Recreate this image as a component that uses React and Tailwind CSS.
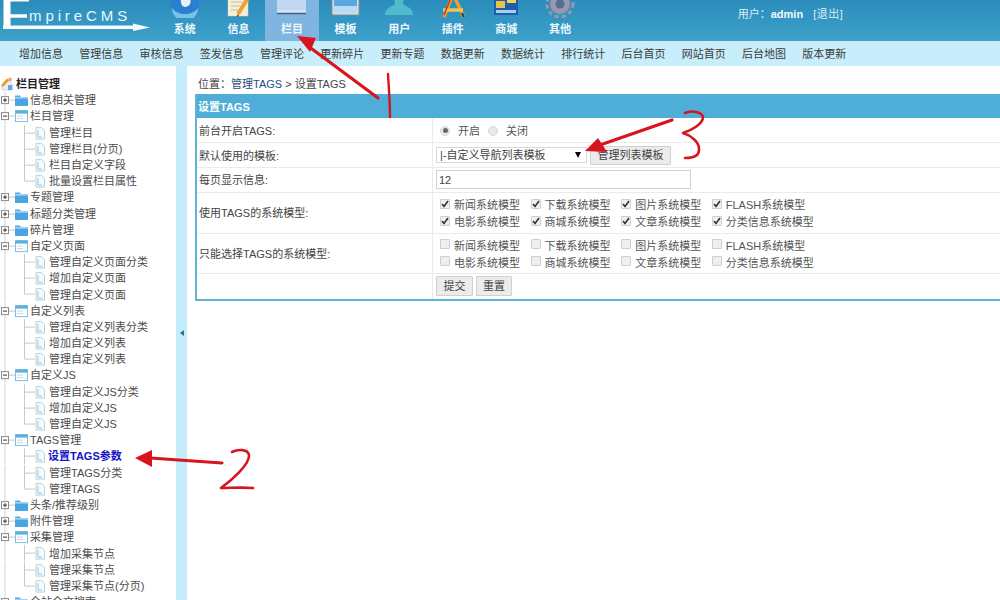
import React from "react";

const navItems = ["系统", "信息", "栏目", "模板", "用户", "插件", "商城", "其他"];
const subItems = ["增加信息", "管理信息", "审核信息", "签发信息", "管理评论", "更新碎片", "更新专题", "数据更新", "数据统计", "排行统计", "后台首页", "网站首页", "后台地图", "版本更新"];

const tree = [
  ["f", "信息相关管理"],
  ["o", "栏目管理"],
  ["c", "管理栏目"], ["c", "管理栏目(分页)"], ["c", "栏目自定义字段"], ["l", "批量设置栏目属性"],
  ["f", "专题管理"], ["f", "标题分类管理"], ["f", "碎片管理"],
  ["o", "自定义页面"],
  ["c", "管理自定义页面分类"], ["c", "增加自定义页面"], ["l", "管理自定义页面"],
  ["o", "自定义列表"],
  ["c", "管理自定义列表分类"], ["c", "增加自定义列表"], ["l", "管理自定义列表"],
  ["o", "自定义JS"],
  ["c", "管理自定义JS分类"], ["c", "增加自定义JS"], ["l", "管理自定义JS"],
  ["o", "TAGS管理"],
  ["a", "设置TAGS参数"], ["c", "管理TAGS分类"], ["l", "管理TAGS"],
  ["f", "头条/推荐级别"], ["f", "附件管理"],
  ["o", "采集管理"],
  ["c", "增加采集节点"], ["c", "管理采集节点"], ["l", "管理采集节点(分页)"],
  ["f", "全站全文搜索"],
];

const models = ["新闻系统模型", "下载系统模型", "图片系统模型", "FLASH系统模型", "电影系统模型", "商城系统模型", "文章系统模型", "分类信息系统模型"];

function NavIcon({ i }) {
  const icons = [
    <g key="0">
      <circle cx="15" cy="3" r="14" fill="#2a7fd0" />
      <path d="M2 8a13 13 0 0 0 26 0c-3 4-8 6-13 6S5 12 2 8z" fill="#7cc0ee" />
      <path d="M11 -2h9c2 5-1 9-5 9-3 0-5-4-4-9z" fill="#e6f2fa" />
    </g>,
    <g key="1">
      <rect x="5" y="-4" width="20" height="20" fill="#f4eedb" stroke="#d8d2bd" strokeWidth="0.5" />
      <path d="M8 2h11M8 6h9M8 10h7" stroke="#c8bda0" strokeWidth="1" />
      <path d="M25 -2l-10 16" stroke="#eda32f" strokeWidth="4" />
      <path d="M15 14l-2 3 3-1z" fill="#5d4a2a" />
    </g>,
    <g key="2">
      <rect x="0" y="-6" width="29" height="20" rx="1" fill="#d3e4f6" />
      <rect x="0" y="-6" width="29" height="16" fill="#c3d8f0" />
      <path d="M0 13.5h29" stroke="#44627f" strokeWidth="1.5" />
    </g>,
    <g key="3">
      <rect x="1" y="-6" width="27" height="21" fill="#d6dfe6" stroke="#78909c" strokeWidth="1" />
      <rect x="3" y="-4" width="23" height="10" fill="#5aa7e2" />
      <rect x="3" y="6" width="23" height="7" fill="#b9dcf3" />
    </g>,
    <g key="4">
      <path d="M10 -2h10l-1 5c0 2 3 3 5 4 3 2 5 4 5 8H1c0-4 2-6 5-8 2-1 5-2 5-4z" fill="#4fbccb" />
    </g>,
    <g key="5">
      <path d="M15 -6L26 17M15 -6L6 17" stroke="#e8a030" strokeWidth="3.5" fill="none" />
      <path d="M5 10h20" stroke="#efc24b" strokeWidth="3.5" />
      <path d="M12 0L6 15" stroke="#c6372e" strokeWidth="1.5" />
      <path d="M26 17l-2-4" stroke="#2b3a55" strokeWidth="2" />
    </g>,
    <g key="6">
      <rect x="3" y="-4" width="24" height="19" fill="#1c5fae" />
      <rect x="5" y="1" width="9" height="7" fill="#e9c24a" />
      <rect x="16" y="-2" width="9" height="5" fill="#f6d64e" />
      <path d="M5 10h20v3H5z" fill="#a8d0ee" />
    </g>,
    <g key="7">
      <circle cx="15" cy="4" r="10" fill="#9c96a8" />
      <circle cx="15" cy="4" r="13" fill="none" stroke="#9c96a8" strokeWidth="3" strokeDasharray="4 3.2" />
      <circle cx="15" cy="4" r="4.5" fill="#4f6f95" />
    </g>,
  ];
  return (
    <svg width="30" height="18" viewBox="0 0 30 18" className="shrink-0" aria-hidden="true">
      {icons[i]}
    </svg>
  );
}

function Logo() {
  return (
    <div className="relative w-[158px] h-[41px] shrink-0 overflow-hidden">
      <svg width="158" height="41" viewBox="0 0 158 41" className="absolute left-0 top-0" aria-hidden="true">
        <path d="M7 -2V27" stroke="#fff" strokeWidth="7" fill="none" />
        <path d="M7 16H27" stroke="#fff" strokeWidth="3.5" />
        <path d="M4 0H29" stroke="#fff" strokeWidth="3" />
        <path d="M3 25.5H133V23.5L150 27.5 133 31V29H3z" fill="#f4fbfe" />
      </svg>
      <span className="absolute left-[29px] top-[6px] text-[15px] leading-[20px] tracking-[3.9px] text-[#eaf6fb] font-normal">mpireCMS</span>
    </div>
  );
}

function TreeGlyph({ kind }) {
  const child = !["f", "o"].includes(kind);
  const last = kind === "l";
  if (child) {
    return (
      <svg width="49" height="16.2" viewBox="0 0 49 16" className="shrink-0" aria-hidden="true">
        <path d="M5 0V16" stroke="#d2d2d2" />
        <path d={last ? "M24.5 0V8H35" : "M24.5 0V16M24.5 8H35"} stroke="#c8c8c8" fill="none" />
        <path d="M36 2.5h5.5l3 3V14H36z" fill="#f6fbfe" stroke="#b9cfdc" />
        <path d="M38 5v7h4" fill="none" stroke="#8fc5e0" />
      </svg>
    );
  }
  const open = kind === "o";
  return (
    <svg width="30" height="16.2" viewBox="0 0 30 16" className="shrink-0" aria-hidden="true">
      <path d="M5 0V16" stroke="#d2d2d2" />
      <path d="M8 8H15" stroke="#c8c8c8" />
      <rect x="1.5" y="4.5" width="7" height="7" fill="#fff" stroke="#8a8a8a" />
      <path d="M3 8H7" stroke="#333" />
      {!open && <path d="M5 6V10" stroke="#333" />}
      {open ? (
        <g>
          <rect x="15.5" y="2.5" width="12" height="11" fill="#fff" stroke="#7fc0e2" />
          <rect x="15.5" y="2.5" width="12" height="3" fill="#58b0e0" />
          <path d="M17 8h6M17 10.5h6" stroke="#bcd9e8" />
        </g>
      ) : (
        <g>
          <path d="M15 3.5h5l1 1.5h7v9H15z" fill="#55ace6" />
          <rect x="15" y="5.5" width="13" height="8" fill="#4aa3e2" />
          <rect x="15" y="5" width="13" height="1.5" fill="#a9d8f5" />
        </g>
      )}
    </svg>
  );
}

function Sidebar() {
  return (
    <aside className="w-[176px] shrink-0 bg-white pt-[9px] overflow-hidden text-[#4b4b4b]">
      <div className="flex items-center h-[17.2px]">
        <svg width="16" height="16" viewBox="0 0 16 16" className="shrink-0" aria-hidden="true">
          <path d="M2 9L7.5 3 13 9V14H2z" fill="#e9eef3" stroke="#b8c4cf" strokeWidth="0.6" />
          <path d="M1 9L7 2.5l2 2L3 11z" fill="#ef9a2c" />
          <circle cx="10" cy="3.5" r="2" fill="#f3b14a" />
          <rect x="8" y="9" width="4" height="5" fill="#5aa7e2" />
        </svg>
        <span className="font-bold text-[#1f1f1f] text-[11px]">栏目管理</span>
      </div>
      {tree.map(([k, t], i) => (
        <div key={i} className="flex items-center h-[16.2px] whitespace-nowrap">
          <TreeGlyph kind={k} />
          <span className={k === "a" ? "font-bold text-[#1414c8] -ml-[1px]" : ""}>{t}</span>
        </div>
      ))}
    </aside>
  );
}

function Radio({ on }) {
  return (
    <span className="w-[10px] h-[10px] rounded-full bg-[#e9e9e9] border border-[#d5d5d5] flex items-center justify-center shrink-0">
      {on && <span className="w-[5px] h-[5px] rounded-full bg-[#666]" />}
    </span>
  );
}

function Check({ on }) {
  return (
    <span className="w-[10px] h-[10px] -mt-[3px] rounded-[1px] bg-[#efefef] border border-[#cfcfcf] flex items-center justify-center shrink-0">
      {on && (
        <svg width="8" height="8" viewBox="0 0 8 8" aria-hidden="true">
          <path d="M1 4l2 2.4L7 1" fill="none" stroke="#333" strokeWidth="1.6" />
        </svg>
      )}
    </span>
  );
}

function Models({ on }) {
  return (
    <div className="grid grid-cols-[90.6px_90.6px_90.6px_auto] gap-y-[6px] pl-[7px] pt-[2px] w-full">
      {models.map((m) => (
        <label key={m} className="flex items-center gap-[4px] h-[11px] whitespace-nowrap">
          <Check on={on} />
          <span className="text-[#555]">{m}</span>
        </label>
      ))}
    </div>
  );
}

function Btn({ children, className }) {
  return (
    <button type="button" className={"bg-[#ececec] border border-[#d0d0d0] rounded-[1px] text-[#444] text-[11px] " + className}>
      {children}
    </button>
  );
}

function Row({ label, h, children }) {
  return (
    <div className={"flex border-b border-[#ebebeb] " + h}>
      <div className="w-[236px] shrink-0 border-r border-[#ebebeb] pl-[2px] pt-[1px] flex items-center text-[#444]">{label}</div>
      <div className="flex-1 flex items-center">{children}</div>
    </div>
  );
}

function Form() {
  return (
    <div className="ml-[8px] border-l-2 border-b-2 border-[#5fb3d3]">
      <div className="h-[24px] bg-[#4eaed8] text-white font-bold pl-[1px] pt-[1px] flex items-center text-[11px]">设置TAGS</div>
      <Row label="前台开启TAGS:" h="h-[25px]">
        <div className="flex items-center pl-[7px] pt-[1px] text-[#555]">
          <Radio on />
          <span className="ml-[8px] mr-[8px]">开启</span>
          <Radio />
          <span className="ml-[8px]">关闭</span>
        </div>
      </Row>
      <Row label="默认使用的模板:" h="h-[25px]">
        <div className="flex items-center pl-[3px]">
          <div className="relative w-[151px] h-[16px] border border-[#d8d8d8] bg-white text-[#444] pl-[3px] flex items-center whitespace-nowrap">
            |-自定义导航列表模板
            <span className="absolute right-[5px] top-[4px] w-0 h-0 border-l-[3px] border-r-[3px] border-t-[6px] border-l-transparent border-r-transparent border-t-black" />
          </div>
          <Btn className="ml-[3px] w-[81px] h-[19px]">管理列表模板</Btn>
        </div>
      </Row>
      <Row label="每页显示信息:" h="h-[24.5px]">
        <div className="ml-[3px] w-[255px] h-[19px] border border-[#cfcfcf] bg-white pl-[2px] flex items-center text-[#444] text-[11px]">12</div>
      </Row>
      <Row label="使用TAGS的系统模型:" h="h-[41px]">
        <Models on />
      </Row>
      <Row label="只能选择TAGS的系统模型:" h="h-[40px]">
        <Models />
      </Row>
      <div className="flex h-[25px]">
        <div className="w-[236px] shrink-0 border-r border-[#ebebeb]" />
        <div className="flex-1 flex items-center pl-[3px] gap-[3px]">
          <Btn className="w-[37px] h-[20px]">提交</Btn>
          <Btn className="w-[36px] h-[20px]">重置</Btn>
        </div>
      </div>
    </div>
  );
}

function Marks() {
  const red = "#d8141f";
  return (
    <svg width="1000" height="600" viewBox="0 0 1000 600" className="absolute left-0 top-0 pointer-events-none" aria-hidden="true">
      <g fill="none" stroke={red} strokeLinecap="round" strokeLinejoin="round">
        <path d="M378 98L308 46" strokeWidth="3.2" />
        <path d="M388 74C389 90 390 104 390 117" strokeWidth="2.4" />
        <path d="M222 463L150 458" strokeWidth="3.2" />
        <path d="M232 452C238 449 248 449 249 455C250 464 232 480 221 488C230 488 243 487 253 488" strokeWidth="2.6" />
        <path d="M672 120L600 145" strokeWidth="3.2" />
        <path d="M685 113C692 110 702 112 703 117C703 124 692 130 683 133C690 135 700 142 699 150C699 156 692 158 685 158" strokeWidth="2.6" />
      </g>
      <g fill={red}>
        <path d="M297 36L316 38 310 52z" />
        <path d="M135 458L152 450 152 467z" />
        <path d="M585 151L598 138 607 152z" />
      </g>
    </svg>
  );
}

export default function App() {
  return (
    <div className="relative w-[1000px] h-[600px] overflow-hidden bg-white text-[11px] leading-[16px] [font-family:'Liberation_Sans','Noto_Sans_CJK_SC',sans-serif]">
      <header className="h-[41px] flex bg-gradient-to-b from-[#2b8cbb] to-[#3da1ca] overflow-hidden">
        <Logo />
        <nav className="flex">
          {navItems.map((n, i) => (
            <div key={n} className={"w-[53.6px] h-[41px] flex flex-col items-center " + (i === 2 ? "bg-[#7fb5e0]" : "")}>
              <NavIcon i={i} />
              <span className="mt-[3px] font-bold text-[#eef8fc] text-[11px]">{n}</span>
            </div>
          ))}
        </nav>
        <div className="ml-[151px] pt-[6px] text-[#d8eff8] whitespace-nowrap">
          用户：<span className="font-bold text-[#f2fafd]">admin</span>
          <span className="ml-[10px] tracking-[0.5px]">[退出]</span>
        </div>
      </header>
      <div className="h-[25px] bg-[#c8eefb] flex items-center pl-[19px] text-[#3c3c3c]">
        {subItems.map((s) => (
          <span key={s} className="w-[60.25px] shrink-0">{s}</span>
        ))}
      </div>
      <div className="flex h-[534px]">
        <Sidebar />
        <div className="w-[11px] shrink-0 bg-[#c5ecfb] flex items-center justify-center">
          <span className="w-0 h-0 border-t-[3px] border-b-[3px] border-r-[4px] border-t-transparent border-b-transparent border-r-[#2f6f8f]" />
        </div>
        <main className="flex-1 min-w-0">
          <div className="h-[28px] pl-[11px] pt-[10px] text-[#444] whitespace-nowrap">
            位置：<span className="text-[#1f4f82]">管理TAGS</span> &gt; 设置TAGS
          </div>
          <Form />
        </main>
      </div>
      <Marks />
    </div>
  );
}
